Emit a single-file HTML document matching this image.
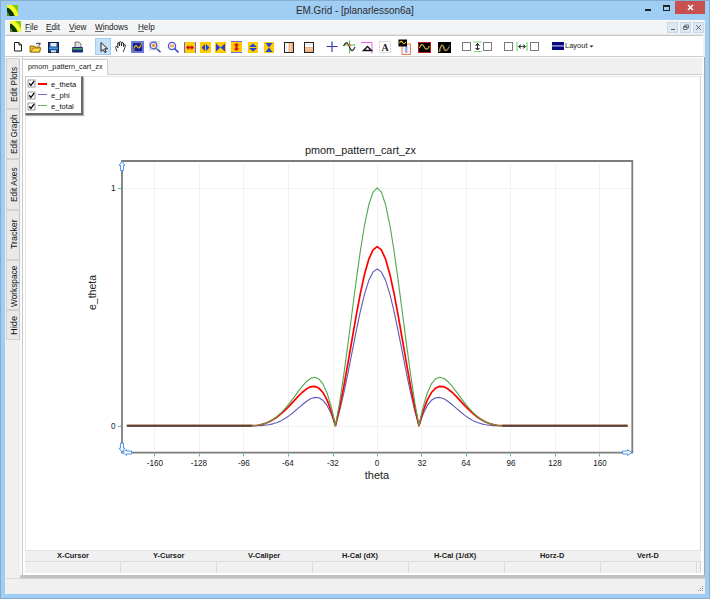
<!DOCTYPE html>
<html><head><meta charset="utf-8">
<style>
*{box-sizing:border-box}
html,body{margin:0;padding:0}
body{width:710px;height:599px;overflow:hidden;position:relative;background:#A0CDF4;font-family:"Liberation Sans",sans-serif;color:#000}
.a{position:absolute}
.t{position:absolute;white-space:pre;line-height:1}
.vt{position:absolute;white-space:pre;line-height:1;transform-origin:0 0;transform:rotate(-90deg);font-size:8.3px;color:#111}
.tab{position:absolute;left:6px;width:14px;background:#E9E9E9;border:1px solid #D2D2D2;border-right:1px solid #C8C8C8}
.sq{position:absolute;width:9px;height:9px;border:1px solid #7A7A7A;background:#fff}
.hd{position:absolute;top:551.7px;font-size:8px;font-weight:bold;color:#1A1A1A;white-space:pre;line-height:1;transform:scaleX(0.93);transform-origin:0 0}
</style></head><body>
<!-- outer border -->
<div class="a" style="left:0;top:0;width:710px;height:599px;border:1px solid #86AED3"></div>
<!-- title icon -->
<svg class="a" style="left:6.5px;top:4.5px" width="11" height="11" viewBox="0 0 11 11">
<rect width="11" height="11" fill="#86C80A"/>
<path d="M0 0 H5 Q9 3 11 8 V11 H8 Q6 5 0 3Z" fill="#E8F820"/>
<path d="M0 0 H2 Q7 2 9 6 L11 11 H9 Q6 5 0 3Z" fill="#FAFA30"/>
<path d="M0 2.5 Q5 4 7.5 11 H2.5 Q1.5 8 0 7Z" fill="#063806"/>
<path d="M0 7 Q1.5 8 2.5 11 H0Z" fill="#6A7A3A"/>
</svg>
<div class="t" style="left:296px;top:6px;font-size:10px;color:#2B2B2B;transform:scaleX(0.99);transform-origin:0 0">EM.Grid - [planarlesson6a]</div>
<!-- min/max/close -->
<div class="a" style="left:645px;top:9px;width:6px;height:2px;background:#222"></div>
<div class="a" style="left:663px;top:5px;width:7px;height:6px;border:1px solid #222;border-top-width:2px"></div>
<div class="a" style="left:675px;top:1px;width:30px;height:13px;background:#C75050"></div>
<svg class="a" style="left:675px;top:1px" width="30" height="13"><path d="M13 4 L18 9 M18 4 L13 9" stroke="#fff" stroke-width="1.5"/></svg>

<!-- client -->
<div class="a" style="left:5px;top:20px;width:700px;height:574px;background:#F0F0F0"></div>
<!-- menu bar -->
<div class="a" style="left:5px;top:20px;width:699px;height:15px;background:#F3F4F6;border-top:1px solid #FAFAFA;border-bottom:1px solid #E4E4E4"></div>
<svg class="a" style="left:10px;top:21.3px" width="11" height="11" viewBox="0 0 11 11">
<rect width="11" height="11" fill="#86C80A"/>
<path d="M0 0 H5 Q9 3 11 8 V11 H8 Q6 5 0 3Z" fill="#E8F820"/>
<path d="M0 0 H2 Q7 2 9 6 L11 11 H9 Q6 5 0 3Z" fill="#FAFA30"/>
<path d="M0 2.5 Q5 4 7.5 11 H2.5 Q1.5 8 0 7Z" fill="#063806"/>
<path d="M0 7 Q1.5 8 2.5 11 H0Z" fill="#6A7A3A"/>
</svg>
<div class="t" style="left:25px;top:22.9px;font-size:8.7px;color:#1A1A1A;transform:scaleX(0.935);transform-origin:0 0">File</div>
<div class="a" style="left:25px;top:31px;width:6px;height:1px;background:#6A6A6A"></div>
<div class="t" style="left:46px;top:22.9px;font-size:8.7px;color:#1A1A1A;transform:scaleX(0.935);transform-origin:0 0">Edit</div>
<div class="a" style="left:46px;top:31px;width:6px;height:1px;background:#6A6A6A"></div>
<div class="t" style="left:69px;top:22.9px;font-size:8.7px;color:#1A1A1A;transform:scaleX(0.935);transform-origin:0 0">View</div>
<div class="a" style="left:69px;top:31px;width:6px;height:1px;background:#6A6A6A"></div>
<div class="t" style="left:95px;top:22.9px;font-size:8.7px;color:#1A1A1A;transform:scaleX(0.935);transform-origin:0 0">Windows</div>
<div class="a" style="left:95px;top:31px;width:9px;height:1px;background:#6A6A6A"></div>
<div class="t" style="left:138px;top:22.9px;font-size:8.7px;color:#1A1A1A;transform:scaleX(0.935);transform-origin:0 0">Help</div>
<div class="a" style="left:138px;top:31px;width:6px;height:1px;background:#6A6A6A"></div>
<!-- MDI buttons -->
<div class="a" style="left:667px;top:22px;width:11px;height:11px;background:#DCE7F4;border:1px solid #C9D6E4"></div>
<div class="a" style="left:670.5px;top:29px;width:4.5px;height:1px;background:#5A5A5A"></div>
<div class="a" style="left:680px;top:22px;width:11px;height:11px;background:#DCE7F4;border:1px solid #C9D6E4"></div>
<svg class="a" style="left:680px;top:22px" width="11" height="11"><path d="M3.5 4.5h3.5v3h-3.5z M4.8 4.5v-1.5h3.7v3h-1.5 M3.5 5.3h3.5" stroke="#5A5A5A" fill="none" stroke-width="0.8"/></svg>
<div class="a" style="left:693px;top:22px;width:11px;height:11px;background:#DCE7F4;border:1px solid #C9D6E4"></div>
<svg class="a" style="left:693px;top:22px" width="11" height="11"><path d="M3.2 3.2 L7.8 7.8 M7.8 3.2 L3.2 7.8" stroke="#555" stroke-width="0.9"/></svg>

<!-- toolbar -->
<div class="a" style="left:5px;top:35px;width:698px;height:23px;background:#FFFFFF;border-top:1px solid #CBCBCB;border-bottom:1px solid #FFFFFF"></div>
<div class="a" style="left:5px;top:56px;width:698px;height:1px;background:#CACACA"></div>
<!-- toolbar icons -->
<svg class="a" style="left:13px;top:41px" width="10" height="11"><path d="M1.5 1.5h4.5l2.5 2.5v6h-7z M6 1.5v2.5h2.5" fill="#fff" stroke="#1A1A1A" stroke-width="1"/></svg>
<svg class="a" style="left:29px;top:41px" width="13" height="12">
<path d="M1 5h4l1 1h5v5H1z" fill="#E8C02A" stroke="#7A5A00" stroke-width="0.8"/>
<path d="M2 11l2-4h8l-2 4z" fill="#FFD84A" stroke="#8A6A00" stroke-width="0.8"/>
<path d="M7 3q2-2 4 0" stroke="#333" fill="none" stroke-width="1"/><path d="M11 1.5v2.5h-2" stroke="#333" fill="none" stroke-width="0.8"/>
</svg>
<svg class="a" style="left:48px;top:42px" width="11" height="11">
<rect x="0.5" y="0.5" width="10" height="10" fill="#1E4E9A" stroke="#0A1A40"/>
<rect x="2.5" y="1" width="6" height="3.5" fill="#E8EEF5"/>
<rect x="1" y="5.5" width="9" height="1.5" fill="#3AA0E8"/>
<rect x="3" y="8" width="5" height="2.5" fill="#C8C8C8"/>
</svg>
<svg class="a" style="left:71px;top:41px" width="13" height="12">
<path d="M4 1h4l2 2v4H4z" fill="#DDD" stroke="#555" stroke-width="0.8"/>
<rect x="1" y="6" width="11" height="5.5" rx="1" fill="#1C2C7A"/>
<rect x="1.5" y="7.3" width="10" height="1.2" fill="#50D060"/>
</svg>
<div class="a" style="left:95px;top:38px;width:16px;height:17px;background:#C6E1F8;border:1px solid #9FCDF4"></div>
<svg class="a" style="left:99px;top:41px" width="10" height="12"><path d="M2 1.5v9l2.2-2 1.6 3 1.4-.7-1.6-3h3z" fill="#E6EEF8" stroke="#222" stroke-width="1"/></svg>
<svg class="a" style="left:114px;top:40px" width="13" height="13"><path d="M3 11.5 L1.5 7.5 Q1.5 6 3 6.5 L4 8 L3.5 3 Q4 2 5 3 L5.5 6 L5.5 2 Q6.5 1 7.2 2 L7.5 6 L8 2.5 Q9 2 9.5 3 L9.5 6.5 L10.5 4.5 Q11.5 4.5 11.5 5.5 L10 10 L9 12" fill="#fff" stroke="#222" stroke-width="0.9"/></svg>
<svg class="a" style="left:131px;top:41px" width="13" height="12">
<rect x="0.5" y="0.5" width="12" height="11" fill="#8090E8" stroke="#6A7AE0"/>
<rect x="1.8" y="1.8" width="9.4" height="8.4" fill="#16208A"/>
<path d="M3 7.5 Q4.5 3 6.3 5.8 Q8 8.8 10 4" stroke="#E8C020" fill="none" stroke-width="1.2"/>
<circle cx="2.8" cy="9" r="0.8" fill="#E8C020"/><circle cx="10.3" cy="2.8" r="0.8" fill="#E8C020"/>
</svg>
<svg class="a" style="left:148px;top:40px" width="14" height="14">
<rect x="1.5" y="1.5" width="9.5" height="8.5" fill="#F2F2F2" stroke="#D8D8D8"/>
<circle cx="5.5" cy="5.5" r="3.3" fill="#F8E0C8" stroke="#4A5AD8" stroke-width="1.3"/>
<circle cx="5.5" cy="5.5" r="1.4" fill="#F07A30"/>
<path d="M8 8 L9.5 9.5" stroke="#40A060" stroke-width="1.3"/><path d="M9.5 9.5 L12.5 12.3" stroke="#3040B0" stroke-width="1.4"/>
</svg>
<svg class="a" style="left:167px;top:41px" width="13" height="13">
<circle cx="5" cy="5" r="3.6" fill="#F8E8D8" stroke="#4A5AD8" stroke-width="1.3"/>
<path d="M3 5h4" stroke="#F07030" stroke-width="1.2"/>
<path d="M7.5 7.5 L11.5 11.5" stroke="#2030C0" stroke-width="1.4"/>
</svg>
<!-- yellow axis icons -->
<svg class="a" style="left:184px;top:42px" width="12" height="11">
<rect x="0" y="0" width="12" height="11" fill="#FFCC00"/>
<rect x="0" y="0" width="1" height="11" fill="#6A6AE0"/><rect x="11" y="0" width="1" height="11" fill="#6A6AE0"/>
<path d="M2 5.5 L4.5 3 V4.5 H7.5 V3 L10 5.5 L7.5 8 V6.5 H4.5 V8Z" fill="#D01010"/>
</svg>
<svg class="a" style="left:200px;top:42px" width="11" height="11">
<rect width="11" height="11" fill="#FFCC00"/>
<path d="M1.5 5.5 L5 2 V9Z M9.5 5.5 L6 2 V9Z" fill="#2040E0"/>
</svg>
<svg class="a" style="left:215px;top:42px" width="11" height="11">
<rect width="11" height="11" fill="#FFCC00"/>
<path d="M1 1.5 L5.5 5.5 L1 9.5Z M10 1.5 L5.5 5.5 L10 9.5Z" fill="#2040E0"/>
</svg>
<svg class="a" style="left:231px;top:41px" width="11" height="12">
<rect width="11" height="12" fill="#FFCC00"/>
<rect width="11" height="1" fill="#6A6AE0"/><rect y="11" width="11" height="1" fill="#6A6AE0"/>
<path d="M5.5 2 L8.5 4.5 H6.5 V7.5 H8.5 L5.5 10 L2.5 7.5 H4.5 V4.5 H2.5Z" fill="#D01010"/>
</svg>
<svg class="a" style="left:248px;top:42px" width="10" height="11">
<rect width="10" height="11" fill="#FFCC00"/>
<path d="M5 1.5 L9 5 H1Z M5 9.5 L9 6 H1Z" fill="#2040E0"/>
</svg>
<svg class="a" style="left:264px;top:42px" width="10" height="11">
<rect width="10" height="11" fill="#FFCC00"/>
<path d="M1.5 1 H8.5 L5 5.5Z M1.5 10 H8.5 L5 5.5Z" fill="#2040E0"/>
</svg>
<!-- split icons -->
<svg class="a" style="left:284px;top:42px" width="10" height="11">
<rect x="0.5" y="0.5" width="9" height="10" fill="#fff" stroke="#222"/>
<rect x="2" y="1" width="1" height="9" fill="#D8ECF8"/>
<rect x="4.5" y="1" width="4.5" height="9" fill="#F2B080"/>
<rect x="6" y="1" width="1" height="9" fill="#F8D8C0"/>
</svg>
<svg class="a" style="left:304px;top:42px" width="10" height="11">
<rect x="0.5" y="0.5" width="9" height="10" fill="#fff" stroke="#222"/>
<rect x="1" y="2" width="8" height="1" fill="#D8ECF8"/>
<rect x="1" y="5" width="8" height="5" fill="#F2B080"/>
<rect x="1" y="6.5" width="8" height="1" fill="#F8D8C0"/>
</svg>
<svg class="a" style="left:326px;top:41px" width="12" height="12"><path d="M6 0.5v10.5 M0.5 5.5h11" stroke="#3838A8" stroke-width="1.2"/></svg>
<svg class="a" style="left:343px;top:40px" width="14" height="14">
<path d="M6.5 0.5v13 M1 5h11" stroke="#40C060" stroke-width="1"/>
<path d="M0.5 6 Q3 1 5 4 Q7 8 8 10 Q10 12 12 7" stroke="#222" fill="none" stroke-width="1.1"/>
<circle cx="6.5" cy="5" r="1.3" fill="#F07020"/>
</svg>
<svg class="a" style="left:361px;top:41px" width="12" height="13">
<path d="M0 1.5h11 v11" stroke="#F060F0" fill="none" stroke-width="1"/>
<path d="M2.5 9.5 L6.5 5.5 L10.5 9.5Z" fill="none" stroke="#111" stroke-width="1.4"/>
</svg>
<svg class="a" style="left:379px;top:41px" width="12" height="12">
<rect x="0.5" y="0.5" width="11" height="11" fill="#fff" stroke="#C8C8C8" stroke-dasharray="1.5 1"/>
<text x="6" y="10" font-family="Liberation Serif" font-weight="bold" font-size="10" text-anchor="middle" fill="#222">A</text>
</svg>
<svg class="a" style="left:398px;top:39px" width="15" height="17">
<rect x="4" y="5" width="8.5" height="10.5" fill="#F2F6FA" stroke="#F08040" stroke-width="1"/>
<rect x="7" y="7" width="2.5" height="7" fill="#A8B0F0"/>
<rect x="0.5" y="0.5" width="8.5" height="7" fill="#000"/>
<path d="M1.5 4 Q3 1 4.5 3.5 Q6 6 8 3" stroke="#E8C020" fill="none" stroke-width="1.1"/>
</svg>
<svg class="a" style="left:418px;top:42px" width="13" height="11">
<rect x="0.5" y="0.5" width="12" height="10" fill="#000" stroke="#C01818"/>
<path d="M1.5 6 Q3.5 0 6 4.5 Q8.5 10 11.5 4" stroke="#D8C020" fill="none" stroke-width="1.1"/>
</svg>
<svg class="a" style="left:438px;top:42px" width="13" height="11">
<rect width="13" height="11" fill="#000"/>
<path d="M1 10 Q4 -2 6 7 Q8 11 11 5" stroke="#D8A818" fill="none" stroke-width="1.1"/>
<path d="M2 10 Q5 -2 7 7 Q9 11 12 3" stroke="#6070A0" fill="none" stroke-width="0.7"/>
</svg>
<div class="sq" style="left:462px;top:42px"></div>
<svg class="a" style="left:473px;top:41px" width="10" height="12">
<path d="M0 1h9 M1 10.5h8" stroke="#70E070" stroke-width="1.2"/>
<path d="M4.5 2v7" stroke="#333" stroke-width="1"/>
<path d="M2.5 4.5 L4.5 2.5 L6.5 4.5 M2.5 7 L4.5 9 L6.5 7" stroke="#333" fill="#333" stroke-width="1"/>
</svg>
<div class="sq" style="left:483px;top:42px"></div>
<div class="sq" style="left:504px;top:42px"></div>
<svg class="a" style="left:516px;top:41px" width="13" height="11">
<path d="M1 1v9 M11 1v9" stroke="#70E070" stroke-width="1.2"/>
<path d="M2 5.5h8" stroke="#444" stroke-width="1"/>
<path d="M4.5 3.5 L2.5 5.5 L4.5 7.5 M7.5 3.5 L9.5 5.5 L7.5 7.5" stroke="#444" fill="#444" stroke-width="1"/>
</svg>
<div class="sq" style="left:530px;top:42px"></div>
<svg class="a" style="left:552px;top:42px" width="12" height="8">
<rect width="12" height="3.5" fill="#0A0A80"/><rect y="3.5" width="12" height="1" fill="#8080C8"/><rect y="4.5" width="12" height="3.5" fill="#0A0A80"/>
</svg>
<div class="t" style="left:565px;top:42.3px;font-size:7.5px;color:#222">Layout</div>
<svg class="a" style="left:589px;top:45px" width="5" height="3"><path d="M0.5 0.5h4l-2 2z" fill="#222"/></svg>
<!-- left tabs -->
<div class="tab" style="top:58px;height:51px"></div>
<div class="vt" style="left:10px;top:102px">Edit Plots</div>
<div class="tab" style="top:109px;height:50px"></div>
<div class="vt" style="left:10px;top:154px">Edit Graph</div>
<div class="tab" style="top:159px;height:51px"></div>
<div class="vt" style="left:10px;top:202px">Edit Axes</div>
<div class="tab" style="top:210px;height:50px"></div>
<div class="vt" style="left:10px;top:249px;transform:rotate(-90deg) scaleX(1.07)">Tracker</div>
<div class="tab" style="top:260px;height:50px"></div>
<div class="vt" style="left:10px;top:307px">Workspace</div>
<div class="tab" style="top:310px;height:30px"></div>
<div class="vt" style="left:10px;top:334.5px;transform:rotate(-90deg) scaleX(1.12)">Hide</div>
<div class="a" style="left:6px;top:578px;width:15px;height:1px;background:#DADADA"></div>

<!-- MDI child frame -->
<div class="a" style="left:20px;top:57px;width:2px;height:521px;background:#FAFAFA"></div>
<div class="a" style="left:22px;top:57px;width:1px;height:521px;background:#C9C9C9"></div>
<div class="a" style="left:702px;top:57px;width:2px;height:521px;background:#FAFAFA"></div>
<div class="a" style="left:704px;top:57px;width:1px;height:521px;background:#A4A4A4"></div>
<div class="a" style="left:23px;top:75px;width:679px;height:500px;background:#fff"></div>
<div class="a" style="left:25px;top:76px;width:676px;height:474px;border-left:1px solid #E6E6E6;border-top:1px solid #E6E6E6;border-right:1.5px solid #D2D2D2"></div>
<div class="a" style="left:20px;top:575px;width:685px;height:4px;background:#C2C2C2;border-bottom:1px solid #D0D0D0"></div>
<!-- doc tab -->
<div class="a" style="left:107px;top:73.5px;width:595px;height:1.5px;background:#CDCDCD"></div>
<div class="a" style="left:22px;top:59px;width:86px;height:16px;background:#fff;border:1px solid #CFCFCF;border-bottom:none"></div>
<div class="t" style="left:28px;top:63.2px;font-size:7.3px;color:#1A1A1A">pmom_pattern_cart_zx</div>

<!-- grid table -->
<div class="a" style="left:25px;top:550px;width:676px;height:12px;background:#F0F0F0;border-top:1px solid #E2E2E2;border-bottom:1px solid #DCDCDC"></div>
<div class="a" style="left:25px;top:562px;width:676px;height:11px;background:#F0F0F0;border-right:1.5px solid #D2D2D2"></div>
<div class="hd" style="left:57px">X-Cursor</div>
<div class="hd" style="left:153px">Y-Cursor</div>
<div class="hd" style="left:248px">V-Caliper</div>
<div class="hd" style="left:342px">H-Cal (dX)</div>
<div class="hd" style="left:434px">H-Cal (1/dX)</div>
<div class="hd" style="left:540px">Horz-D</div>
<div class="hd" style="left:637px">Vert-D</div>
<div class="a" style="left:120px;top:562px;width:1px;height:11px;background:#DCDCDC"></div>
<div class="a" style="left:216px;top:562px;width:1px;height:11px;background:#DCDCDC"></div>
<div class="a" style="left:312px;top:562px;width:1px;height:11px;background:#DCDCDC"></div>
<div class="a" style="left:408px;top:562px;width:1px;height:11px;background:#DCDCDC"></div>
<div class="a" style="left:504px;top:562px;width:1px;height:11px;background:#DCDCDC"></div>
<div class="a" style="left:600px;top:562px;width:1px;height:11px;background:#DCDCDC"></div>
<div class="a" style="left:696px;top:562px;width:1px;height:11px;background:#DCDCDC"></div>
<!-- status bar grip -->
<svg class="a" style="left:697px;top:585px" width="8" height="8"><g fill="#8A8A8A"><rect x="5" y="1" width="1" height="1"/><rect x="3" y="3" width="1" height="1"/><rect x="5" y="3" width="1" height="1"/><rect x="1" y="5" width="1" height="1"/><rect x="3" y="5" width="1" height="1"/><rect x="5" y="5" width="1" height="1"/></g></svg>
<svg class="a" style="left:0;top:0" width="710" height="599" viewBox="0 0 710 599">
<path d="M154.5 163V451" stroke="#F2F2F2" stroke-width="1"/>
<path d="M199.5 163V451" stroke="#F2F2F2" stroke-width="1"/>
<path d="M243.5 163V451" stroke="#F2F2F2" stroke-width="1"/>
<path d="M288.5 163V451" stroke="#F2F2F2" stroke-width="1"/>
<path d="M333.5 163V451" stroke="#F2F2F2" stroke-width="1"/>
<path d="M377.5 163V451" stroke="#F2F2F2" stroke-width="1"/>
<path d="M421.5 163V451" stroke="#F2F2F2" stroke-width="1"/>
<path d="M466.5 163V451" stroke="#F2F2F2" stroke-width="1"/>
<path d="M510.5 163V451" stroke="#F2F2F2" stroke-width="1"/>
<path d="M555.5 163V451" stroke="#F2F2F2" stroke-width="1"/>
<path d="M599.5 163V451" stroke="#F2F2F2" stroke-width="1"/>
<path d="M124 426.5H631" stroke="#F2F2F2" stroke-width="1"/>
<path d="M124 188.5H631" stroke="#F2F2F2" stroke-width="1"/>
<path d="M122 452.7V161H632.3V452.7Z" stroke="#7C7C7C" stroke-width="1.8" fill="none"/>
<path d="M154.5 453.5v3" stroke="#5FB8B8" stroke-width="1"/>
<path d="M199.5 453.5v3" stroke="#5FB8B8" stroke-width="1"/>
<path d="M243.5 453.5v3" stroke="#5FB8B8" stroke-width="1"/>
<path d="M288.5 453.5v3" stroke="#5FB8B8" stroke-width="1"/>
<path d="M333.5 453.5v3" stroke="#5FB8B8" stroke-width="1"/>
<path d="M377.5 453.5v3" stroke="#5FB8B8" stroke-width="1"/>
<path d="M421.5 453.5v3" stroke="#5FB8B8" stroke-width="1"/>
<path d="M466.5 453.5v3" stroke="#5FB8B8" stroke-width="1"/>
<path d="M510.5 453.5v3" stroke="#5FB8B8" stroke-width="1"/>
<path d="M555.5 453.5v3" stroke="#5FB8B8" stroke-width="1"/>
<path d="M599.5 453.5v3" stroke="#5FB8B8" stroke-width="1"/>
<path d="M118 426.5h3" stroke="#5FB8B8" stroke-width="1"/>
<path d="M118 188.5h3" stroke="#5FB8B8" stroke-width="1"/>
<polyline points="126.89,425.70 131.06,425.70 135.24,425.70 139.41,425.70 143.58,425.70 147.75,425.70 151.92,425.70 156.09,425.70 160.27,425.70 164.44,425.70 168.61,425.70 172.78,425.70 176.95,425.70 181.13,425.70 185.30,425.70 189.47,425.70 193.64,425.70 197.81,425.70 201.98,425.70 206.16,425.70 210.33,425.70 214.50,425.70 218.67,425.70 222.84,425.70 227.02,425.70 231.19,425.70 235.36,425.70 239.53,425.70 243.70,425.70 247.87,425.70 252.05,425.70 256.22,425.69 260.39,425.59 264.56,425.31 268.73,424.77 272.90,423.85 277.08,422.50 281.25,420.64 285.42,418.25 289.59,415.35 293.76,412.03 297.94,408.42 302.11,404.79 306.28,401.45 310.45,398.83 314.62,397.41 318.79,397.74 322.97,400.33 327.14,405.65 331.31,414.06 335.48,425.70 339.65,410.68 343.83,392.84 348.00,372.86 352.17,351.69 356.34,330.54 360.51,310.72 364.68,293.57 368.86,280.31 373.03,271.92 377.20,269.06 381.37,271.92 385.54,280.31 389.72,293.57 393.89,310.72 398.06,330.54 402.23,351.69 406.40,372.86 410.57,392.84 414.75,410.68 418.92,425.70 423.09,414.06 427.26,405.65 431.43,400.33 435.61,397.74 439.78,397.41 443.95,398.83 448.12,401.45 452.29,404.79 456.46,408.42 460.64,412.03 464.81,415.35 468.98,418.25 473.15,420.64 477.32,422.50 481.50,423.85 485.67,424.77 489.84,425.31 494.01,425.59 498.18,425.69 502.35,425.70 506.53,425.70 510.70,425.70 514.87,425.70 519.04,425.70 523.21,425.70 527.38,425.70 531.56,425.70 535.73,425.70 539.90,425.70 544.07,425.70 548.24,425.70 552.42,425.70 556.59,425.70 560.76,425.70 564.93,425.70 569.10,425.70 573.27,425.70 577.45,425.70 581.62,425.70 585.79,425.70 589.96,425.70 594.13,425.70 598.31,425.70 602.48,425.70 606.65,425.70 610.82,425.70 614.99,425.70 619.16,425.70 623.34,425.70 627.51,425.70" stroke="#5A5AB8" stroke-width="1.1" fill="none" stroke-linejoin="round"/>
<polyline points="126.89,425.70 131.06,425.70 135.24,425.70 139.41,425.70 143.58,425.70 147.75,425.70 151.92,425.70 156.09,425.70 160.27,425.70 164.44,425.70 168.61,425.70 172.78,425.70 176.95,425.70 181.13,425.70 185.30,425.70 189.47,425.70 193.64,425.70 197.81,425.70 201.98,425.70 206.16,425.70 210.33,425.70 214.50,425.70 218.67,425.70 222.84,425.70 227.02,425.70 231.19,425.70 235.36,425.70 239.53,425.70 243.70,425.70 247.87,425.70 252.05,425.70 256.22,425.48 260.39,424.82 264.56,423.67 268.73,421.99 272.90,419.77 277.08,416.99 281.25,413.65 285.42,409.82 289.59,405.59 293.76,401.12 297.94,396.65 302.11,392.51 306.28,389.10 310.45,386.87 314.62,386.35 318.79,388.08 322.97,392.54 327.14,400.16 331.31,411.20 335.48,425.70 339.65,407.38 343.83,386.20 348.00,362.96 352.17,338.75 356.34,314.87 360.51,292.71 364.68,273.68 368.86,259.05 373.03,249.84 377.20,246.69 381.37,249.84 385.54,259.05 389.72,273.68 393.89,292.71 398.06,314.87 402.23,338.75 406.40,362.96 410.57,386.20 414.75,407.38 418.92,425.70 423.09,411.20 427.26,400.16 431.43,392.54 435.61,388.08 439.78,386.35 443.95,386.87 448.12,389.10 452.29,392.51 456.46,396.65 460.64,401.12 464.81,405.59 468.98,409.82 473.15,413.65 477.32,416.99 481.50,419.77 485.67,421.99 489.84,423.67 494.01,424.82 498.18,425.48 502.35,425.70 506.53,425.70 510.70,425.70 514.87,425.70 519.04,425.70 523.21,425.70 527.38,425.70 531.56,425.70 535.73,425.70 539.90,425.70 544.07,425.70 548.24,425.70 552.42,425.70 556.59,425.70 560.76,425.70 564.93,425.70 569.10,425.70 573.27,425.70 577.45,425.70 581.62,425.70 585.79,425.70 589.96,425.70 594.13,425.70 598.31,425.70 602.48,425.70 606.65,425.70 610.82,425.70 614.99,425.70 619.16,425.70 623.34,425.70 627.51,425.70" stroke="#FF0000" stroke-width="1.7" fill="none" stroke-linejoin="round"/>
<polyline points="126.89,425.70 131.06,425.70 135.24,425.70 139.41,425.70 143.58,425.70 147.75,425.70 151.92,425.70 156.09,425.70 160.27,425.70 164.44,425.70 168.61,425.70 172.78,425.70 176.95,425.70 181.13,425.70 185.30,425.70 189.47,425.70 193.64,425.70 197.81,425.70 201.98,425.70 206.16,425.70 210.33,425.70 214.50,425.70 218.67,425.70 222.84,425.70 227.02,425.70 231.19,425.70 235.36,425.70 239.53,425.70 243.70,425.70 247.87,425.70 252.05,425.70 256.22,425.48 260.39,424.81 264.56,423.63 268.73,421.88 272.90,419.49 277.08,416.42 281.25,412.64 285.42,408.16 289.59,403.08 293.76,397.57 297.94,391.90 302.11,386.47 306.28,381.79 310.45,378.48 314.62,377.24 318.79,378.83 322.97,383.95 327.14,393.23 331.31,407.10 335.48,425.70 339.65,402.01 343.83,374.31 348.00,343.67 352.17,311.52 356.34,279.62 360.51,249.89 364.68,224.28 368.86,204.54 373.03,192.09 377.20,187.83 381.37,192.09 385.54,204.54 389.72,224.28 393.89,249.89 398.06,279.62 402.23,311.52 406.40,343.67 410.57,374.31 414.75,402.01 418.92,425.70 423.09,407.10 427.26,393.23 431.43,383.95 435.61,378.83 439.78,377.24 443.95,378.48 448.12,381.79 452.29,386.47 456.46,391.90 460.64,397.57 464.81,403.08 468.98,408.16 473.15,412.64 477.32,416.42 481.50,419.49 485.67,421.88 489.84,423.63 494.01,424.81 498.18,425.48 502.35,425.70 506.53,425.70 510.70,425.70 514.87,425.70 519.04,425.70 523.21,425.70 527.38,425.70 531.56,425.70 535.73,425.70 539.90,425.70 544.07,425.70 548.24,425.70 552.42,425.70 556.59,425.70 560.76,425.70 564.93,425.70 569.10,425.70 573.27,425.70 577.45,425.70 581.62,425.70 585.79,425.70 589.96,425.70 594.13,425.70 598.31,425.70 602.48,425.70 606.65,425.70 610.82,425.70 614.99,425.70 619.16,425.70 623.34,425.70 627.51,425.70" stroke="#4EA84E" stroke-width="1.1" fill="none" stroke-linejoin="round"/>
<path d="M126.9 425.7H252.0 M502.4 425.7H627.5" stroke="#4F4A38" stroke-width="2"/>
<path d="M0 0.3 L2.9 4.3 H1.5 V9.3 H-1.5 V4.3 H-2.9 Z" transform="translate(122 161.2) rotate(0)" fill="#FFFDF5" stroke="#3C8CF0" stroke-width="0.9" stroke-linejoin="round"/>
<path d="M0 0.3 L2.9 4.3 H1.5 V9.3 H-1.5 V4.3 H-2.9 Z" transform="translate(122 452.5) rotate(180)" fill="#FFFDF5" stroke="#3C8CF0" stroke-width="0.9" stroke-linejoin="round"/>
<path d="M0 0.3 L2.9 4.3 H1.5 V9.3 H-1.5 V4.3 H-2.9 Z" transform="translate(122.3 452.5) rotate(-90)" fill="#FFFDF5" stroke="#3C8CF0" stroke-width="0.9" stroke-linejoin="round"/>
<path d="M0 0.3 L2.9 4.3 H1.5 V9.3 H-1.5 V4.3 H-2.9 Z" transform="translate(632 452.5) rotate(90)" fill="#FFFDF5" stroke="#3C8CF0" stroke-width="0.9" stroke-linejoin="round"/>
</svg>
<div class="t" style="left:134.7px;width:40px;text-align:center;top:457.9px;font-size:9.6px;color:#1A1A1A;transform:scaleX(0.85)">-160</div>
<div class="t" style="left:179.2px;width:40px;text-align:center;top:457.9px;font-size:9.6px;color:#1A1A1A;transform:scaleX(0.85)">-128</div>
<div class="t" style="left:223.7px;width:40px;text-align:center;top:457.9px;font-size:9.6px;color:#1A1A1A;transform:scaleX(0.85)">-96</div>
<div class="t" style="left:268.2px;width:40px;text-align:center;top:457.9px;font-size:9.6px;color:#1A1A1A;transform:scaleX(0.85)">-64</div>
<div class="t" style="left:312.7px;width:40px;text-align:center;top:457.9px;font-size:9.6px;color:#1A1A1A;transform:scaleX(0.85)">-32</div>
<div class="t" style="left:357.2px;width:40px;text-align:center;top:457.9px;font-size:9.6px;color:#1A1A1A;transform:scaleX(0.85)">0</div>
<div class="t" style="left:401.7px;width:40px;text-align:center;top:457.9px;font-size:9.6px;color:#1A1A1A;transform:scaleX(0.85)">32</div>
<div class="t" style="left:446.2px;width:40px;text-align:center;top:457.9px;font-size:9.6px;color:#1A1A1A;transform:scaleX(0.85)">64</div>
<div class="t" style="left:490.7px;width:40px;text-align:center;top:457.9px;font-size:9.6px;color:#1A1A1A;transform:scaleX(0.85)">96</div>
<div class="t" style="left:535.2px;width:40px;text-align:center;top:457.9px;font-size:9.6px;color:#1A1A1A;transform:scaleX(0.85)">128</div>
<div class="t" style="left:579.7px;width:40px;text-align:center;top:457.9px;font-size:9.6px;color:#1A1A1A;transform:scaleX(0.85)">160</div>
<div class="t" style="left:110.5px;top:182.9px;font-size:9.6px;color:#1A1A1A;transform:scaleX(0.88);transform-origin:0 0">1</div>
<div class="t" style="left:110.8px;top:421.3px;font-size:9.6px;color:#1A1A1A;transform:scaleX(0.85);transform-origin:0 0">0</div>
<div class="t" style="left:356px;top:469.7px;width:42px;text-align:center;font-size:11px;color:#222">theta</div>
<div class="t" style="left:305px;top:145px;font-size:10.85px;color:#222">pmom_pattern_cart_zx</div>
<div class="vt" style="left:87.1px;top:310px;font-size:10.5px;color:#222">e_theta</div>
<div class="a" style="left:25px;top:76px;width:58px;height:39px;background:#fff;border:1px solid #C8C8C8;border-right:2px solid #6A6A6A;border-bottom:2px solid #6A6A6A;box-shadow:1px 1px 1px #B0B0B0"></div><svg class="a" style="left:27px;top:79.3px" width="9" height="9"><rect x="1" y="1" width="7" height="7" fill="#fff" stroke="#9A9A9A"/><path d="M2.2 4.3 L3.9 6.4 L7.2 2.2" stroke="#000" stroke-width="1.3" fill="none"/></svg><div class="a" style="left:38px;top:82.8px;width:9px;height:2px;background:#FF0000"></div><div class="t" style="left:51px;top:80.8px;font-size:7.6px;color:#111">e_theta</div><svg class="a" style="left:27px;top:90.6px" width="9" height="9"><rect x="1" y="1" width="7" height="7" fill="#fff" stroke="#9A9A9A"/><path d="M2.2 4.3 L3.9 6.4 L7.2 2.2" stroke="#000" stroke-width="1.3" fill="none"/></svg><div class="a" style="left:38px;top:94.1px;width:9px;height:1px;background:#7070C8"></div><div class="t" style="left:51px;top:92.1px;font-size:7.6px;color:#111">e_phi</div><svg class="a" style="left:27px;top:101.9px" width="9" height="9"><rect x="1" y="1" width="7" height="7" fill="#fff" stroke="#9A9A9A"/><path d="M2.2 4.3 L3.9 6.4 L7.2 2.2" stroke="#000" stroke-width="1.3" fill="none"/></svg><div class="a" style="left:38px;top:105.4px;width:9px;height:1px;background:#60B060"></div><div class="t" style="left:51px;top:103.4px;font-size:7.6px;color:#111">e_total</div>
</body></html>
